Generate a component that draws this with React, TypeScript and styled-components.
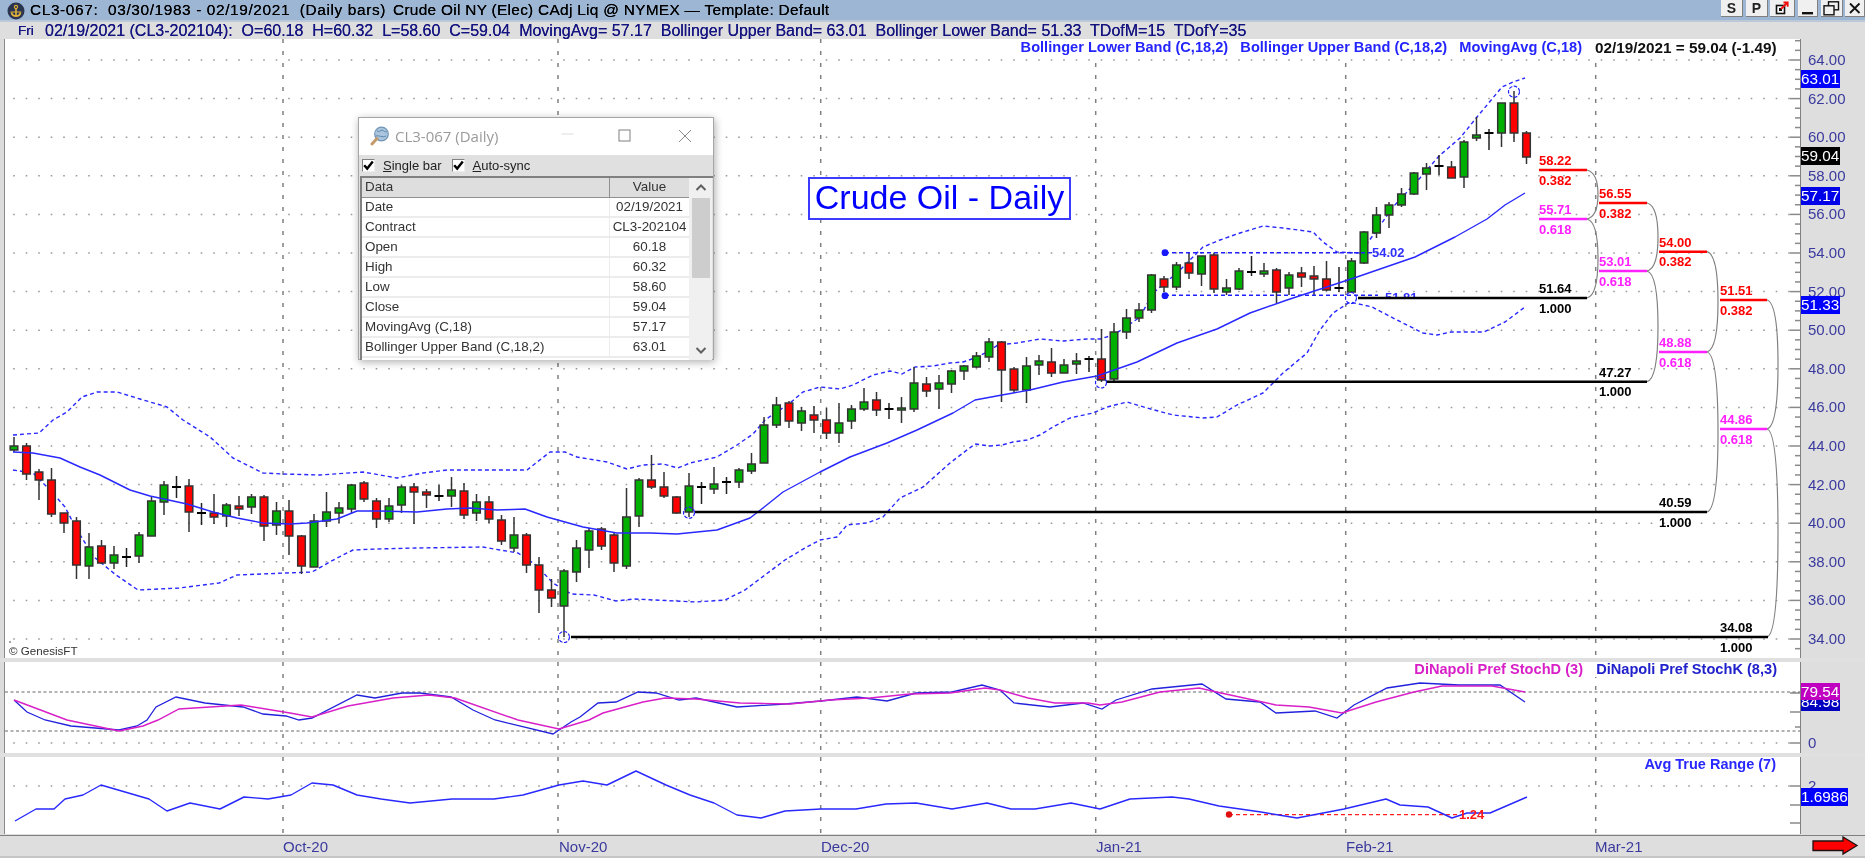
import React from "react";
import styled, { createGlobalStyle } from "styled-components";

const SANS = `"Liberation Sans", Arial, sans-serif`;

const GlobalStyle = createGlobalStyle`
  html, body { margin: 0; padding: 0; background: #dedede; overflow: hidden; }
  #root { width: 1865px; height: 858px; }
`;

type Pt = [number, number];
type Candle = ["G" | "R" | "D", number, number, number, number];

const candles: Candle[] = [
  ["G",437,446,450,452],["R",443,446,474,480],["R",469,472,480,500],["R",468,480,514,517],["R",513,513,523,533],
  ["R",517,521,565,579],["G",533,547,566,579],["R",540,546,563,564],["G",546,555,563,569],["D",548,557,557,567],
  ["G",532,535,556,563],["G",497,501,536,536],["G",481,485,502,515],["D",476,487,487,498],["R",479,486,512,532],
  ["D",503,513,513,525],["R",494,513,517,524],["G",503,505,516,527],["R",496,506,509,516],["G",494,497,507,514],
  ["R",495,497,526,541],["G",502,511,525,535],["R",500,511,536,555],["R",535,536,566,574],["G",514,521,567,567],
  ["G",492,512,521,527],["G",502,508,513,523],["G",484,485,509,513],["R",481,483,499,502],["R",498,501,519,528],
  ["G",498,506,519,522],["G",485,487,505,513],["R",483,487,492,524],["R",489,492,495,508],["D",485,496,496,501],
  ["G",477,490,496,507],["R",483,491,515,519],["G",494,502,513,521],["R",496,502,519,523],["R",515,520,541,545],
  ["G",517,535,548,552],["R",533,535,565,573],["R",557,565,590,613],["R",579,590,598,607],["G",569,571,606,637],
  ["G",540,548,572,582],["G",528,531,550,568],["R",527,529,546,550],["R",533,535,563,572],["G",488,517,566,569],
  ["G",478,480,516,527],["R",455,480,487,489],["R",472,487,496,498],["R",496,497,513,514],["G",473,486,512,517],
  ["D",482,487,487,504],["G",467,484,489,494],["D",477,482,482,494],["G",468,470,482,488],["G",453,464,471,474],
  ["G",417,425,463,463],["G",397,405,425,428],["R",401,403,421,428],["G",407,411,423,431],["R",406,415,420,433],
  ["R",408,420,433,439],["G",403,423,433,443],["G",405,409,421,429],["G",388,402,409,411],["R",392,400,410,416],
  ["D",403,409,409,419],["G",397,408,410,423],["G",367,383,409,412],["R",377,384,391,397],["G",375,383,389,409],
  ["G",370,371,384,393],["G",365,366,371,380],["G",352,356,367,368],["G",338,342,357,362],["R",341,342,370,402],
  ["R",367,369,390,393],["G",357,366,390,403],["G",355,361,365,375],["R",348,362,373,377],["G",359,365,373,373],
  ["G",353,361,364,374],["D",356,359,359,372],["R",329,359,380,382],["G",323,332,379,381],["G",309,318,332,339],
  ["G",303,310,318,322],["G",274,275,310,313],["R",276,279,287,292],["G",262,265,287,290],["R",252,263,273,279],
  ["G",256,256,274,286],["R",253,255,289,293],["G",279,288,292,295],["G",268,271,289,290],["D",256,272,272,276],
  ["G",263,271,274,277],["R",268,270,292,303],["G",272,275,288,295],["R",267,273,277,287],["R",266,276,279,295],
  ["R",261,279,290,291],["D",267,288,288,292],["G",258,261,292,292],["G",231,232,263,264],["G",207,215,233,238],
  ["G",202,205,215,228],["G",188,194,205,207],["G",172,173,194,195],["G",163,168,174,190],["D",155,166,166,175],
  ["R",161,167,178,178],["G",140,142,177,188],["G",117,135,138,141],["D",129,133,133,150],["G",103,103,133,147],
  ["R",91,103,133,142],["R",131,133,157,164],
];

const upperBand: Pt[] = [
  [13,435],[39,433],[53,420],[67,412],[82,397],[97,392],[117,392],[140,399],[167,407],[183,420],[210,437],[233,458],
  [263,473],[283,474],[320,475],[363,472],[380,475],[397,478],[423,473],[447,470],[527,470],[550,452],[565,452],
  [577,457],[607,462],[627,469],[643,465],[663,464],[678,468],[690,463],[717,457],[737,445],[753,434],[765,420],
  [790,403],[803,392],[820,387],[840,389],[853,385],[873,375],[890,371],[902,374],[915,367],[933,366],[950,363],
  [963,362],[975,358],[987,352],[998,345],[1017,343],[1040,339],[1063,341],[1087,339],[1100,339],[1113,335],
  [1123,329],[1140,317],[1153,293],[1177,273],[1190,260],[1203,247],[1220,240],[1240,233],[1263,226],[1283,228],
  [1313,232],[1323,242],[1337,252],[1360,253],[1377,230],[1393,207],[1420,178],[1439,156],[1460,138],[1477,117],
  [1502,87],[1513,82],[1525,78],
];

const movingAvg: Pt[] = [
  [13,452],[33,453],[60,458],[80,467],[100,475],[130,490],[150,496],[187,504],[213,512],[237,518],[263,523],[290,524],
  [307,523],[337,519],[357,511],[380,511],[417,512],[447,509],[470,508],[497,510],[525,509],[547,517],[583,527],
  [617,533],[650,533],[677,534],[717,530],[750,518],[763,508],[783,492],[820,472],[850,457],[887,443],[917,430],
  [953,413],[975,400],[1002,395],[1030,390],[1063,382],[1097,376],[1137,362],[1177,343],[1217,329],[1250,313],
  [1287,300],[1354,278],[1415,257],[1455,237],[1487,219],[1505,205],[1525,193],
];

const lowerBand: Pt[] = [
  [13,470],[33,473],[50,490],[65,507],[77,530],[94,557],[116,575],[138,590],[179,588],[219,583],[237,575],[286,573],
  [312,572],[337,558],[353,550],[377,549],[416,548],[483,547],[500,550],[518,553],[536,565],[553,583],[571,594],
  [594,595],[616,601],[634,599],[696,602],[725,600],[745,590],[765,575],[785,560],[805,548],[820,540],[837,537],
  [847,525],[867,523],[883,517],[900,498],[923,487],[950,463],[963,453],[975,444],[990,446],[1002,445],[1013,442],
  [1027,440],[1040,435],[1053,427],[1070,418],[1093,413],[1107,407],[1127,402],[1147,408],[1173,415],[1203,418],
  [1217,417],[1237,405],[1263,393],[1283,373],[1307,353],[1320,330],[1333,313],[1350,302],[1372,307],[1397,320],
  [1423,333],[1437,335],[1451,332],[1484,332],[1505,322],[1525,307],
];

const stochK: Pt[] = [
  [14,700],[27,712],[45,720],[71,726],[119,730],[137,726],[147,720],[156,707],[176,697],[205,703],[243,707],[263,714],
  [286,716],[299,720],[312,718],[357,695],[375,698],[402,693],[420,693],[451,697],[473,710],[495,720],[553,734],
  [571,722],[580,717],[598,703],[616,702],[638,692],[656,693],[679,700],[696,698],[737,707],[785,704],[821,701],
  [857,697],[887,701],[916,693],[952,692],[982,685],[1000,690],[1014,703],[1050,707],[1083,703],[1102,709],[1116,700],
  [1152,689],[1182,686],[1202,684],[1226,699],[1260,702],[1276,713],[1315,711],[1337,718],[1354,705],[1387,688],
  [1420,683],[1459,685],[1500,685],[1525,702],
];

const stochD: Pt[] = [
  [14,700],[67,720],[119,731],[143,726],[158,720],[179,709],[241,705],[290,713],[312,717],[348,706],[393,698],[429,695],
  [455,698],[518,720],[559,729],[589,720],[603,713],[643,702],[665,698],[696,699],[740,703],[790,704],[830,700],
  [870,698],[910,694],[950,693],[985,688],[1000,690],[1028,698],[1055,703],[1088,703],[1100,705],[1122,702],[1160,692],
  [1199,688],[1221,693],[1276,705],[1309,707],[1342,713],[1376,702],[1414,692],[1442,686],[1492,686],[1525,692],
];

const atrLine: Pt[] = [
  [15,821],[36,809],[54,809],[65,799],[83,795],[101,785],[125,792],[149,799],[167,811],[190,803],[220,809],[244,797],
  [268,799],[291,795],[312,783],[333,785],[357,795],[381,799],[410,803],[452,799],[494,799],[523,795],[559,785],
  [583,781],[607,785],[636,771],[666,785],[690,795],[714,803],[737,815],[761,818],[785,811],[821,809],[856,809],
  [886,804],[916,803],[952,809],[987,803],[1011,809],[1035,809],[1071,803],[1100,809],[1130,799],[1172,797],
  [1189,799],[1219,806],[1261,812],[1297,818],[1344,809],[1386,799],[1400,805],[1428,807],[1452,818],[1467,813],
  [1490,813],[1527,797],
];

const prices = Array.from({ length: 16 }, (_, i) => 64 - i * 2);
const priceY = (p: number) => 60 + (64 - p) * 19.3;
const gridX = [283, 558, 820.7, 1095.7, 1345.7, 1595.7];
const toPoints = (pts: Pt[]) => pts.map(([x, y]) => `${x},${y}`).join(" ");

type Fib = { x1: number; x2: number; y: number; value: string; ratio: string; color: string; textX: number };
const fibLines: Fib[] = [
  { x1: 1539, x2: 1587, y: 170, value: "58.22", ratio: "0.382", color: "#ff0000", textX: 1539 },
  { x1: 1539, x2: 1587, y: 219, value: "55.71", ratio: "0.618", color: "#ff20ff", textX: 1539 },
  { x1: 1358, x2: 1587, y: 298, value: "51.64", ratio: "1.000", color: "#000000", textX: 1539 },
  { x1: 1599, x2: 1647, y: 203, value: "56.55", ratio: "0.382", color: "#ff0000", textX: 1599 },
  { x1: 1599, x2: 1647, y: 271, value: "53.01", ratio: "0.618", color: "#ff20ff", textX: 1599 },
  { x1: 1106, x2: 1647, y: 381.7, value: "47.27", ratio: "1.000", color: "#000000", textX: 1599 },
  { x1: 1659, x2: 1707, y: 251.7, value: "54.00", ratio: "0.382", color: "#ff0000", textX: 1659 },
  { x1: 1659, x2: 1707, y: 352, value: "48.88", ratio: "0.618", color: "#ff20ff", textX: 1659 },
  { x1: 695, x2: 1707, y: 512, value: "40.59", ratio: "1.000", color: "#000000", textX: 1659 },
  { x1: 1720, x2: 1767, y: 300, value: "51.51", ratio: "0.382", color: "#ff0000", textX: 1720 },
  { x1: 1720, x2: 1767, y: 429, value: "44.86", ratio: "0.618", color: "#ff20ff", textX: 1720 },
  { x1: 571, x2: 1768, y: 637, value: "34.08", ratio: "1.000", color: "#000000", textX: 1720 },
];

const brackets: [number, number, number][] = [
  [1587, 170, 219], [1587, 219, 298], [1647, 203, 271], [1647, 271, 381.7],
  [1707, 251.7, 352], [1707, 352, 512], [1767, 300, 429], [1767, 429, 637],
];

const bracketPath = (x: number, y0: number, y1: number) => {
  const h = y1 - y0;
  const m = (y0 + y1) / 2;
  return `M${x} ${y0} C${x + 8} ${y0 + 2} ${x + 11} ${y0 + h * 0.22} ${x + 11} ${m} C${x + 11} ${y1 - h * 0.22} ${x + 8} ${y1 - 2} ${x} ${y1}`;
};

const Page = styled.div`
  position: relative;
  width: 1865px;
  height: 858px;
  display: flex;
  flex-direction: column;
  overflow: hidden;
  background: #dedede;
  font-family: ${SANS};
  filter: blur(0.35px);
`;

const TitleBar = styled.header`
  height: 20px;
  flex: none;
  display: flex;
  align-items: center;
  background: #9db6d3;
  border-bottom: 2px solid #bcc8d8;
  box-sizing: content-box;
`;

const AppIcon = styled.svg`
  width: 18px;
  height: 18px;
  margin: 1px 5px 0 7px;
  flex: none;
`;

const TitleText = styled.span<{ $spacing: number; $width?: number }>`
  font-size: 15.4px;
  letter-spacing: ${(p) => p.$spacing}px;
  color: #000;
  white-space: pre;
  flex: ${(p) => (p.$width ? "none" : "1")};
  width: ${(p) => (p.$width ? `${p.$width}px` : "auto")};
  text-shadow: 0 0 0.6px #000;
`;

const WindowButtons = styled.div`
  display: flex;
  align-items: flex-start;
  height: 20px;
`;

const WindowButton = styled.button<{ $w: number; $mr: number }>`
  width: ${(p) => p.$w}px;
  height: 17px;
  margin: 0 ${(p) => p.$mr}px 0 0;
  padding: 0;
  display: flex;
  align-items: center;
  justify-content: center;
  background: #f0f0f0;
  border: none;
  border-right: 1px solid #808080;
  border-bottom: 1px solid #808080;
  font: bold 14px ${SANS};
  color: #222;
`;

const InfoBar = styled.div`
  height: 17px;
  flex: none;
  display: flex;
  align-items: center;
  background: #dedede;
  color: #141480;
  font-size: 16px;
  white-space: pre;
  text-shadow: 0 0 0.5px #141480;
`;

const DayName = styled.span`
  width: 27px;
  margin-left: 18px;
  font-size: 13.5px;
`;

const ChartStack = styled.main`
  flex: none;
  display: flex;
  flex-direction: column;
  height: 796px;
`;

const PanelRow = styled.section<{ $height: number }>`
  flex: none;
  height: ${(p) => p.$height}px;
  display: flex;
  background: #fff;
`;

const Separator = styled.div`
  flex: none;
  height: 4px;
  background: #e0e0e0;
`;

const LeftEdge = styled.div`
  flex: none;
  width: 3.5px;
  background: #dcdcdc;
  border-right: 1.5px solid #8a8a8a;
`;

const PlotSvg = styled.svg`
  flex: none;
  width: 1795px;
  height: 100%;
  display: block;
  background: #fff;
  border-right: 1.5px solid #808080;
  box-sizing: content-box;
`;

const AxisColumn = styled.div`
  position: relative;
  flex: 1;
  background: #dedede;
`;

const AxisLabel = styled.span<{ $top: number }>`
  position: absolute;
  left: 7.5px;
  top: ${(p) => p.$top - 9}px;
  height: 18px;
  line-height: 18px;
  font-size: 15px;
  color: #3a3a9e;
`;

const ValueTag = styled.span<{ $top: number; $bg: string; $h?: number }>`
  position: absolute;
  left: 0;
  top: ${(p) => p.$top}px;
  height: ${(p) => p.$h ?? 18}px;
  line-height: ${(p) => p.$h ?? 18}px;
  padding: 0 0.5px;
  overflow: hidden;
  background: ${(p) => p.$bg};
  color: #fff;
  font-size: 15.3px;
`;

const ChartText = styled.text<{ $color?: string; $size?: number; $weight?: string }>`
  font-family: ${SANS};
  font-size: ${(p) => p.$size ?? 13}px;
  font-weight: ${(p) => p.$weight ?? "bold"};
  fill: ${(p) => p.$color ?? "#000"};
  dominant-baseline: central;
`;

const AxisText = styled.text`
  font-family: ${SANS};
  font-size: 15px;
  fill: #3a3a9e;
  dominant-baseline: central;
`;

const TimeAxisSvg = styled.svg`
  flex: none;
  width: 1865px;
  height: 20px;
  display: block;
  background: #dedede;
  border-top: 1px solid #808080;
  box-sizing: content-box;
`;

const BottomEdge = styled.div`
  flex: none;
  height: 3px;
  background: #c6c6c6;
`;

const ChartNote = styled.div`
  position: absolute;
  left: 808px;
  top: 177px;
  width: 263px;
  height: 43px;
  box-sizing: border-box;
  border: 2px solid #3c3cff;
  background: #fff;
  color: #0000ff;
  font-size: 34px;
  line-height: 36px;
  text-align: center;
  white-space: nowrap;
`;

const Dialog = styled.aside`
  position: absolute;
  left: 358px;
  top: 117px;
  width: 356px;
  height: 243px;
  box-sizing: border-box;
  display: flex;
  flex-direction: column;
  background: #e0e0e0;
  border: 1px solid #a6a6a6;
  box-shadow: 1px 2px 8px rgba(0, 0, 0, 0.32);
`;

const DialogTitle = styled.div`
  height: 37px;
  flex: none;
  box-sizing: border-box;
  padding-bottom: 2px;
  display: flex;
  align-items: center;
  background: #fff;
  color: #9a9a9a;
  font: 15px "Open Sans", ${SANS};
`;

const DialogIcon = styled.svg`
  width: 20px;
  height: 20px;
  margin: 0 5px 0 11px;
`;

const DialogTitleText = styled.span`
  flex: 1;
`;

const DialogControl = styled.svg<{ $mr: number }>`
  width: 14px;
  height: 14px;
  margin-right: ${(p) => p.$mr}px;
  flex: none;
`;

const DialogTools = styled.div`
  height: 21px;
  flex: none;
  display: flex;
  align-items: center;
  font-size: 13px;
  color: #222;
`;

const CheckBox = styled.span<{ $ml: number }>`
  width: 13px;
  height: 13px;
  margin-left: ${(p) => p.$ml}px;
  margin-right: 8px;
  flex: none;
  box-sizing: border-box;
  display: flex;
  align-items: center;
  justify-content: center;
  background: #fff;
  border: 1px solid #808080;
  border-right-color: #eee;
  border-bottom-color: #eee;
`;

const Mnemonic = styled.span`
  text-decoration: underline;
`;

const GridFrame = styled.div`
  flex: none;
  height: 182px;
  margin-left: 1px;
  display: flex;
  border-top: 2px solid #808080;
  border-left: 2px solid #808080;
`;

const DataColumn = styled.div`
  width: 327px;
  flex: none;
  background: #fff;
`;

const DataRow = styled.div<{ $header?: boolean }>`
  display: grid;
  grid-template-columns: 247px 80px;
  height: 20px;
  box-sizing: border-box;
  border-bottom: ${(p) => (p.$header ? "1px solid #909090" : "2px solid #ececec")};
  background: ${(p) => (p.$header ? "#dedede" : "#fff")};
  font-size: 13.4px;
  line-height: 18px;
  color: #333;
`;

const NameCell = styled.span`
  padding-left: 3px;
  white-space: nowrap;
  overflow: hidden;
`;

const ValueCell = styled.span<{ $header?: boolean }>`
  text-align: center;
  border-left: 1.5px solid ${(p) => (p.$header ? "#909090" : "#ececec")};
`;

const ScrollTrack = styled.div`
  width: 23px;
  flex: none;
  display: flex;
  flex-direction: column;
  align-items: center;
  background: #f0f0f0;
`;

const ScrollArrow = styled.svg`
  width: 14px;
  height: 20px;
  flex: none;
`;

const ScrollThumb = styled.div`
  width: 18px;
  height: 80px;
  flex: none;
  background: #cdcdcd;
`;

const ScrollSpace = styled.div`
  flex: 1;
`;

const tableRows: [string, string][] = [
  ["Date", "02/19/2021"],
  ["Contract", "CL3-202104"],
  ["Open", "60.18"],
  ["High", "60.32"],
  ["Low", "58.60"],
  ["Close", "59.04"],
  ["MovingAvg (C,18)", "57.17"],
  ["Bollinger Upper Band (C,18,2)", "63.01"],
];

const DotRow = ({ y, x2 = 1796 }: { y: number; x2?: number }) => (
  <line x1={13.2} x2={x2} y1={y} y2={y} stroke="#9a9a9a" strokeWidth={1.5} strokeDasharray="1.6 10.9" />
);

const VerticalGrid = ({ y1, y2 }: { y1: number; y2: number }) => (
  <>
    {gridX.map((x) => (
      <line key={x} x1={x} x2={x} y1={y1} y2={y2} stroke="#808080" strokeWidth={1.5} strokeDasharray="4 8" />
    ))}
  </>
);

const Ticks = ({ list }: { list: [number, boolean][] }) => (
  <>
    {list.map(([y, major]) => (
      <line key={y} x1={major ? 1790 : 1795} x2={1800} y1={y} y2={y} stroke="#8a8a8a" strokeWidth={1.5} />
    ))}
  </>
);

const Ring = ({ x, y }: { x: number; y: number }) => (
  <circle cx={x} cy={y} r={5.5} fill="none" stroke="#2020ff" strokeWidth={1.2} strokeDasharray="3.5 1.5" />
);

const BlueLine = ({ pts, dashed }: { pts: Pt[]; dashed?: boolean }) => (
  <polyline
    points={toPoints(pts)}
    fill="none"
    stroke="#2828ff"
    strokeWidth={1.4}
    strokeLinejoin="round"
    strokeDasharray={dashed ? "4 3" : undefined}
  />
);

const priceTicks: [number, boolean][] = Array.from({ length: 64 }, (_, i) => {
  const y = 40.7 + i * 9.65;
  return [y, (i - 2) % 4 === 0] as [number, boolean];
});

const PricePanel = () => (
  <PlotSvg viewBox="5 39 1795 619">
    {prices.map((p) => <DotRow key={p} y={priceY(p)} />)}
    <VerticalGrid y1={39} y2={658} />
    <Ticks list={priceTicks} />

    <rect x={1018} y={39} width={770} height={16} fill="#fff" />
    <ChartText x={1582} y={47} textAnchor="end" $color="#2424ff" $size={14.6} xmlSpace="preserve">
      Bollinger Lower Band (C,18,2)   Bollinger Upper Band (C,18,2)   MovingAvg (C,18)
    </ChartText>
    <ChartText x={1595} y={47} $size={15.3} $color="#111">02/19/2021 = 59.04 (-1.49)</ChartText>

    <BlueLine pts={upperBand} dashed />
    <BlueLine pts={lowerBand} dashed />

    {brackets.map(([x, a, b]) => (
      <path key={`${x}-${a}`} d={bracketPath(x, a, b)} fill="none" stroke="#808080" strokeWidth={1.2} />
    ))}

    {candles.map(([kind, hi, top, bot, lo], i) => {
      const x = 14 + 12.5 * i;
      return (
        <g key={i}>
          <line x1={x} x2={x} y1={hi} y2={lo} stroke={kind === "D" ? "#222" : "#333"} strokeWidth={1.5} />
          {kind === "D" ? (
            <rect x={x - 4.5} y={top - 1} width={9} height={2} fill="#000" />
          ) : (
            <rect
              x={x - 3.8}
              y={top}
              width={7.6}
              height={bot - top}
              fill={kind === "G" ? "#00b000" : "#ff0000"}
              stroke="#333"
              strokeWidth={1.5}
            />
          )}
        </g>
      );
    })}

    <BlueLine pts={movingAvg} />

    <line x1={1165} x2={1372} y1={252.7} y2={252.7} stroke="#2020ff" strokeWidth={1.5} strokeDasharray="4 3" />
    <line x1={1165} x2={1378} y1={295.3} y2={295.3} stroke="#2020ff" strokeWidth={1.5} strokeDasharray="4 3" />
    <circle cx={1165} cy={252.7} r={3.4} fill="#1818ff" />
    <circle cx={1165} cy={295.7} r={3.4} fill="#1818ff" />
    <ChartText x={1372} y={252} $color="#3030ff">54.02</ChartText>
    <ChartText x={1385} y={297} $color="#3030ff">51.81</ChartText>
    <rect x={1383} y={297} width={36} height={10} fill="#fff" />

    {fibLines.map((f) => (
      <g key={f.value}>
        <line x1={f.x1} x2={f.x2} y1={f.y} y2={f.y} stroke={f.color} strokeWidth={2.4} />
        <ChartText x={f.textX} y={f.y - 9.5} $color={f.color}>{f.value}</ChartText>
        <ChartText x={f.textX} y={f.y + 10} $color={f.color}>{f.ratio}</ChartText>
      </g>
    ))}

    <Ring x={1514} y={91.7} />
    <Ring x={1351} y={298} />
    <Ring x={1101} y={382.5} />
    <Ring x={689} y={512.7} />
    <Ring x={564} y={637} />

    <circle cx={10} cy={642} r={0.8} fill="#333" />
    <ChartText x={9} y={650} $size={11.6} $weight="normal" $color="#333">© GenesisFT</ChartText>
  </PlotSvg>
);

const StochPanel = () => (
  <PlotSvg viewBox="5 662 1795 91">
    <DotRow y={743} />
    <VerticalGrid y1={662} y2={753} />
    <Ticks list={[[693, true], [712, true], [727, false], [743, true]]} />
    <line x1={5} x2={1800} y1={692} y2={692} stroke="#666" strokeWidth={1} strokeDasharray="3 2.5" />
    <line x1={5} x2={1800} y1={731} y2={731} stroke="#666" strokeWidth={1} strokeDasharray="3 2.5" />
    <polyline points={toPoints(stochK)} fill="none" stroke="#2222dd" strokeWidth={1.3} />
    <polyline points={toPoints(stochD)} fill="none" stroke="#d81fc8" strokeWidth={1.4} />
    <rect x={1410} y={662} width={370} height={15} fill="#fff" />
    <ChartText x={1583} y={669} textAnchor="end" $size={14.6} $color="#d81fc8">DiNapoli Pref StochD (3)</ChartText>
    <ChartText x={1777} y={669} textAnchor="end" $size={14.6} $color="#2222cc">DiNapoli Pref StochK (8,3)</ChartText>
  </PlotSvg>
);

const AtrPanel = () => (
  <PlotSvg viewBox="5 757 1795 77">
    <DotRow y={786} />
    <VerticalGrid y1={757} y2={834} />
    <Ticks list={[[786, true], [805, true], [823, true]]} />
    <line x1={1229} x2={1458} y1={814.7} y2={814.7} stroke="#ff2020" strokeWidth={1.2} strokeDasharray="4 3" />
    <circle cx={1229} cy={814.5} r={3.2} fill="#e01010" />
    <BlueLine pts={atrLine} />
    <ChartText x={1459} y={814.7} $color="#ff1818">1.24</ChartText>
    <ChartText x={1776} y={764} textAnchor="end" $size={14.5} $color="#2828ff">Avg True Range (7)</ChartText>
  </PlotSvg>
);

const timeLabels: [string, number][] = [
  ["Oct-20", 283], ["Nov-20", 559], ["Dec-20", 821], ["Jan-21", 1096], ["Feb-21", 1346], ["Mar-21", 1595],
];

const Check = () => (
  <svg width="11" height="11" viewBox="0 0 11 11">
    <path d="M1.2 5.2 L4.2 8.6 L9.8 1.6" fill="none" stroke="#000" strokeWidth={2.4} />
  </svg>
);

export default function App() {
  return (
    <Page>
      <GlobalStyle />
      <TitleBar>
        <AppIcon viewBox="0 0 18 18">
          <circle cx="9" cy="9" r="8.5" fill="#2c3550" />
          <circle cx="9" cy="5" r="1.6" fill="none" stroke="#e2b33c" strokeWidth="1.1" />
          <path d="M9 6.5V14 M4.5 10.5C5 13 7 14.2 9 14.2S13 13 13.5 10.5" fill="none" stroke="#e2b33c" strokeWidth="1.6" />
          <path d="M3.5 10h10.8" stroke="#e2b33c" strokeWidth="1" />
        </AppIcon>
        <TitleText $spacing={0.62} $width={363}>{"CL3-067:  03/30/1983 - 02/19/2021  (Daily bars)"}</TitleText>
        <TitleText $spacing={0.3}>{"Crude Oil NY (Elec) CAdj Liq @ NYMEX — Template: Default"}</TitleText>
        <WindowButtons>
          <WindowButton $w={22} $mr={3}>S</WindowButton>
          <WindowButton $w={22} $mr={2}>P</WindowButton>
          <WindowButton $w={25} $mr={3}>
            <svg width="14" height="14" viewBox="0 0 14 14">
              <rect x="1.5" y="4.5" width="8" height="8" fill="#fff" stroke="#111" strokeWidth="1.6" />
              <rect x="4" y="7" width="3" height="3" fill="#111" />
              <path d="M6 8 L12 2 M8.5 1.5H12.7V5.7" fill="none" stroke="#f01010" strokeWidth="1.8" />
            </svg>
          </WindowButton>
          <WindowButton $w={20} $mr={3}>
            <svg width="14" height="14" viewBox="0 0 14 14"><rect x="1" y="11" width="11" height="2.4" fill="#111" /></svg>
          </WindowButton>
          <WindowButton $w={22} $mr={2}>
            <svg width="17" height="15" viewBox="0 0 17 15">
              <rect x="5.5" y="0.8" width="10" height="8" fill="#f0f0f0" stroke="#111" strokeWidth="1.4" />
              <rect x="1" y="4.8" width="10" height="9" fill="#f0f0f0" stroke="#111" strokeWidth="1.4" />
            </svg>
          </WindowButton>
          <WindowButton $w={20} $mr={0}>
            <svg width="13" height="13" viewBox="0 0 13 13"><path d="M2 1.5 L11.5 11 M11.5 1.5 L2 11" stroke="#111" strokeWidth="1.8" /></svg>
          </WindowButton>
        </WindowButtons>
      </TitleBar>

      <InfoBar>
        <DayName>Fri</DayName>
        {"02/19/2021 (CL3-202104):  O=60.18  H=60.32  L=58.60  C=59.04  MovingAvg= 57.17  Bollinger Upper Band= 63.01  Bollinger Lower Band= 51.33  TDofM=15  TDofY=35"}
      </InfoBar>

      <ChartStack>
        <PanelRow $height={619}>
          <LeftEdge />
          <PricePanel />
          <AxisColumn>
            {prices.map((p) => (
              <AxisLabel key={p} $top={priceY(p) - 39}>{p.toFixed(2)}</AxisLabel>
            ))}
            <ValueTag $top={31} $bg="#0000ff">63.01</ValueTag>
            <ValueTag $top={108} $bg="#000">59.04</ValueTag>
            <ValueTag $top={148} $bg="#0000e8">57.17</ValueTag>
            <ValueTag $top={257} $bg="#0000ff">51.33</ValueTag>
          </AxisColumn>
        </PanelRow>
        <Separator />
        <PanelRow $height={91}>
          <LeftEdge />
          <StochPanel />
          <AxisColumn>
            <AxisLabel $top={81}>0</AxisLabel>
            <ValueTag $top={30} $bg="#0000c0" $h={19}>84.98</ValueTag>
            <ValueTag $top={21} $bg="#c000c0" $h={17}>79.54</ValueTag>
          </AxisColumn>
        </PanelRow>
        <Separator />
        <PanelRow $height={77}>
          <LeftEdge />
          <AtrPanel />
          <AxisColumn>
            <AxisLabel $top={29}>2</AxisLabel>
            <ValueTag $top={31} $bg="#0000ff">1.6986</ValueTag>
          </AxisColumn>
        </PanelRow>
      </ChartStack>

      <TimeAxisSvg viewBox="0 835 1865 20">
        {timeLabels.map(([label, x]) => (
          <AxisText key={label} x={x} y={845}>{label}</AxisText>
        ))}
        <path d="M1813 840H1843V836L1857 844.5L1843 853V849.5H1813Z" fill="#ff0000" stroke="#201010" strokeWidth="1.3" />
      </TimeAxisSvg>
      <BottomEdge />

      <ChartNote>Crude Oil - Daily</ChartNote>

      <Dialog>
        <DialogTitle>
          <DialogIcon viewBox="0 0 20 20">
            <circle cx="11.5" cy="8" r="6.8" fill="#a9c6de" stroke="#6f93b5" strokeWidth="1.2" />
            <path d="M7 5c2 1 3 0 5-1 2 1 3 2 5 2M6 10c3-1 6 2 10 0" fill="none" stroke="#5f86a8" strokeWidth="1" />
            <path d="M7 12.5L2 18" stroke="#c49a6c" strokeWidth="3" strokeLinecap="round" />
          </DialogIcon>
          <DialogTitleText>CL3-067 (Daily)</DialogTitleText>
          <DialogControl $mr={43} viewBox="0 0 14 14"><line x1="0.5" x2="12.5" y1="5" y2="5" stroke="#ddd" strokeWidth="1" /></DialogControl>
          <DialogControl $mr={46} viewBox="0 0 14 14"><rect x="1" y="1" width="11" height="11" fill="none" stroke="#8a8a8a" strokeWidth="1.1" /></DialogControl>
          <DialogControl $mr={21} viewBox="0 0 14 14"><path d="M1 1L13 13M13 1L1 13" stroke="#8a8a8a" strokeWidth="1" /></DialogControl>
        </DialogTitle>
        <DialogTools>
          <CheckBox $ml={3}><Check /></CheckBox>
          <span><Mnemonic>S</Mnemonic>ingle bar</span>
          <CheckBox $ml={10}><Check /></CheckBox>
          <span><Mnemonic>A</Mnemonic>uto-sync</span>
        </DialogTools>
        <GridFrame>
          <DataColumn>
            <DataRow $header>
              <NameCell>Data</NameCell>
              <ValueCell $header>Value</ValueCell>
            </DataRow>
            {tableRows.map(([name, value]) => (
              <DataRow key={name}>
                <NameCell>{name}</NameCell>
                <ValueCell>{value}</ValueCell>
              </DataRow>
            ))}
          </DataColumn>
          <ScrollTrack>
            <ScrollArrow viewBox="0 0 14 20"><path d="M2.5 12L7 7.5L11.5 12" fill="none" stroke="#606060" strokeWidth="2" /></ScrollArrow>
            <ScrollThumb />
            <ScrollSpace />
            <ScrollArrow viewBox="0 0 14 20"><path d="M2.5 8L7 12.5L11.5 8" fill="none" stroke="#606060" strokeWidth="2" /></ScrollArrow>
          </ScrollTrack>
        </GridFrame>
      </Dialog>
    </Page>
  );
}
